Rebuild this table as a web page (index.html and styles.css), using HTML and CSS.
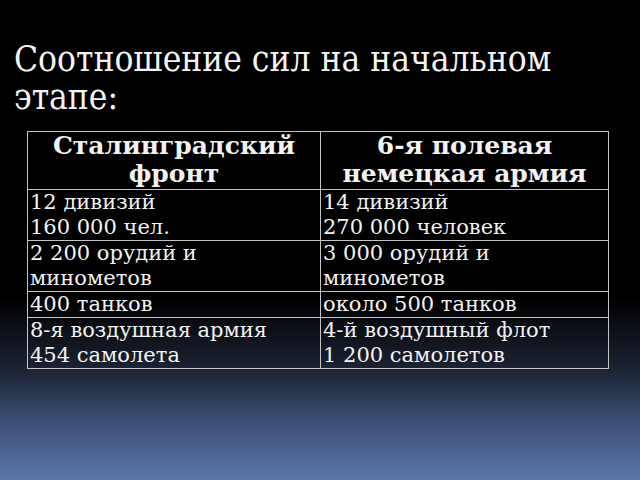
FILE: index.html
```html
<!DOCTYPE html>
<html lang="ru">
<head>
<meta charset="utf-8">
<title>Соотношение сил</title>
<link rel="stylesheet" href="styles.css">
</head>
<body>
<div class="slide">
  <h1 class="title">Соотношение сил на начальном этапе:</h1>
  <table class="forces">
    <colgroup><col class="c1"><col class="c2"></colgroup>
    <tr class="head">
      <th>Сталинградский фронт</th>
      <th>6-я полевая немецкая армия</th>
    </tr>
    <tr><td>12 дивизий<br>160 000 чел.</td><td>14 дивизий<br>270 000 человек</td></tr>
    <tr><td>2 200 орудий и минометов</td><td>3 000 орудий и минометов</td></tr>
    <tr><td>400 танков</td><td>около 500 танков</td></tr>
    <tr><td>8-я воздушная армия<br>454 самолета</td><td>4-й воздушный флот<br>1 200 самолетов</td></tr>
  </table>
</div>
</body>
</html>
```
FILE: styles.css
```css
html, body {
  margin: 0;
  padding: 0;
}
body {
  width: 640px;
  height: 480px;
  overflow: hidden;
  background: linear-gradient(to bottom, #000 0%, #000 62%, #1c2333 77%, #3d5075 88%, #5b77aa 100%);
}
.slide {
  display: flex;
  flex-direction: column;
  padding: 40px 0 0 0;
}
.title {
  margin: 0 0 15px 14px;
  font-family: "DejaVu Serif Condensed", "DejaVu Serif", serif;
  font-weight: normal;
  font-size: 35px;
  line-height: 38px;
  color: #f4f4f4;
  width: 600px;
}
.forces {
  margin-left: 27px;
  width: 581px;
  border-collapse: collapse;
  table-layout: fixed;
  font-family: "DejaVu Serif", serif;
  color: #f2f2f2;
}
.c1 { width: 293px; }
.c2 { width: 288px; }
.forces th, .forces td {
  border: 1px solid #c4c4c4;
  vertical-align: top;
}
.forces th {
  font-size: 25px;
  font-weight: bold;
  line-height: 28px;
  text-align: center;
  padding: 0 2px 1px;
}
.forces td {
  font-size: 21px;
  line-height: 25px;
  text-align: left;
  padding: 0 2px;
}
```
